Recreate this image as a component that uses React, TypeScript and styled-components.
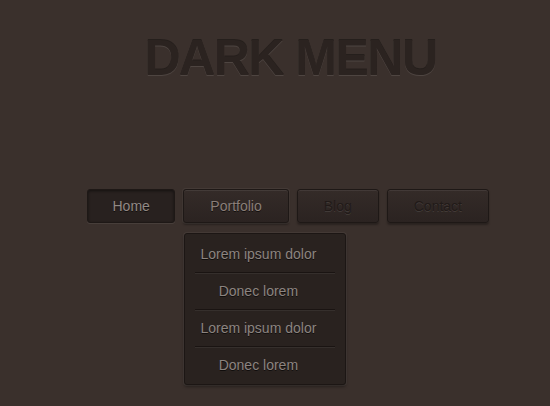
import React from "react";
import styled, { createGlobalStyle } from "styled-components";

const GlobalStyle = createGlobalStyle`
  html, body {
    margin: 0;
    padding: 0;
    background: #3a302c;
    font-family: "Liberation Sans", Arial, sans-serif;
  }
`;

const items = ["Home", "Portfolio", "Blog", "Contact"];
const subItems = ["Lorem ipsum dolor", "Donec lorem", "Lorem ipsum dolor", "Donec lorem"];

const App = () => {
  return (
    <>
      <GlobalStyle />
      <Page>
        <Title>DARK MENU</Title>
        <Nav>
          {items.map((label) => (
            <NavItem key={label}>
              <NavButton $state={label === "Home" ? "active" : label === "Portfolio" ? "hover" : "idle"}>
                {label}
              </NavButton>
              {label === "Portfolio" && (
                <Dropdown>
                  {subItems.map((s, i) => (
                    <DropItem key={i} $last={i === subItems.length - 1}>
                      {s}
                    </DropItem>
                  ))}
                </Dropdown>
              )}
            </NavItem>
          ))}
        </Nav>
      </Page>
    </>
  );
};

export default App;

const Page = styled.div`
  width: 100%;
  height: 406px;
  padding: 33px 0 0 26px;
  box-sizing: border-box;
  display: flex;
  flex-direction: column;
  align-items: center;
  overflow: hidden;
`;

const Title = styled.h1`
  margin: 0 0 0 5px;
  font-size: 50px;
  line-height: 50px;
  font-weight: bold;
  letter-spacing: -1.5px;
  color: #2b2320;
  text-shadow: 0 1px 0 rgba(255, 255, 255, 0.1), 0 -1px 0 rgba(0, 0, 0, 0.35);
`;

const Nav = styled.ul`
  list-style: none;
  margin: 106px 0 0;
  padding: 0;
  display: flex;
  gap: 8px;
`;

const NavItem = styled.li`
  position: relative;
`;

type BtnState = "active" | "hover" | "idle";

const NavButton = styled.a<{ $state: BtnState }>`
  display: block;
  height: 34px;
  box-sizing: border-box;
  padding: 0 ${(p) => (p.$state === "active" ? "24.5px" : "26px")};
  line-height: 32px;
  font-size: 14px;
  cursor: pointer;
  border-radius: 3px;
  border: 1px solid #1e1816;
  background: ${(p) =>
    p.$state === "active"
      ? "#28211f"
      : "linear-gradient(#342b28, #2b2321)"};
  color: ${(p) => (p.$state === "idle" ? "#211a18" : p.$state === "active" ? "#918984" : "#8a7e78")};
  text-shadow: ${(p) =>
    p.$state === "idle"
      ? "0 1px 0 rgba(255, 255, 255, 0.1)"
      : "0 1px 0 rgba(0, 0, 0, 0.6)"};
  box-shadow: ${(p) =>
    p.$state === "active"
      ? "inset 0 1px 3px rgba(0, 0, 0, 0.5), 0 1px 0 rgba(255, 255, 255, 0.07)"
      : p.$state === "hover"
      ? "inset 0 1px 0 rgba(255, 255, 255, 0.08), 0 0 0 1px rgba(255, 255, 255, 0.05), 0 2px 2px rgba(0, 0, 0, 0.3)"
      : "inset 0 1px 0 rgba(255, 255, 255, 0.07), 0 2px 2px rgba(0, 0, 0, 0.3)"};
`;

const Dropdown = styled.ul`
  position: absolute;
  top: 44px;
  left: 1px;
  width: 162px;
  box-sizing: border-box;
  list-style: none;
  margin: 0;
  padding: 2px 0 1px;
  background: #29221f;
  border: 1px solid #1c1614;
  border-radius: 3px;
  box-shadow: 0 0 0 1px rgba(255, 255, 255, 0.05), 0 2px 3px rgba(0, 0, 0, 0.35);
`;

const DropItem = styled.li<{ $last: boolean }>`
  height: ${(p) => (p.$last ? "36px" : "37px")};
  box-sizing: border-box;
  margin: 0 10px;
  padding-right: 14px;
  line-height: 36px;
  text-align: center;
  font-size: 14px;
  color: #8c8480;
  text-shadow: 0 1px 0 rgba(0, 0, 0, 0.6);
  border-bottom: ${(p) => (p.$last ? "none" : "1px solid #1a1412")};
  box-shadow: ${(p) => (p.$last ? "none" : "0 1px 0 rgba(255, 255, 255, 0.06)")};
`;
